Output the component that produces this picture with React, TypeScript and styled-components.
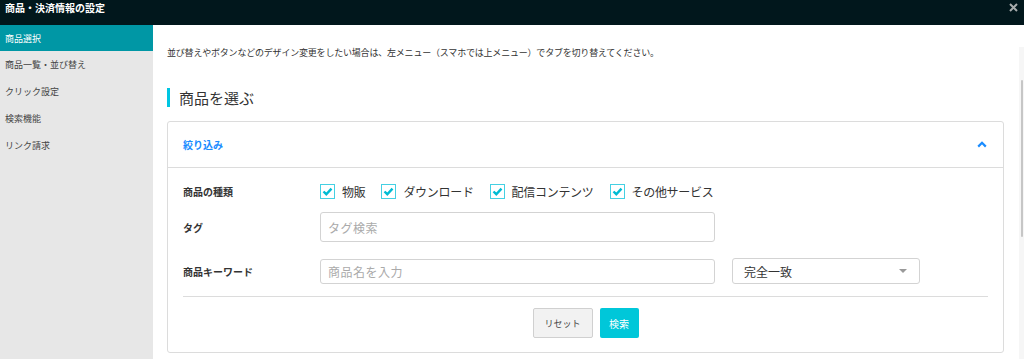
import styled, { createGlobalStyle } from "styled-components";

const GlobalStyle = createGlobalStyle`
  html, body {
    margin: 0;
    padding: 0;
    background: #fff;
  }
  body {
    font-family: "Noto Sans CJK JP", "Noto Sans", sans-serif;
    color: #333;
    overflow: hidden;
  }
  * { box-sizing: border-box; }
`;

const menuItems = ["商品選択", "商品一覧・並び替え", "クリック設定", "検索機能", "リンク請求"];
const kinds = ["物販", "ダウンロード", "配信コンテンツ", "その他サービス"];

const CheckIcon = () => (
  <svg width="11" height="9" viewBox="0 0 11 9">
    <polyline points="1.5,4.5 4.3,7.2 9.5,1.6" fill="none" stroke="#00bcd4" strokeWidth="2.4" />
  </svg>
);

const App = () => {
  return (
    <Page>
      <GlobalStyle />
      <Header>
        <Title>商品・決済情報の設定</Title>
        <svg width="9" height="9" viewBox="0 0 9 9">
          <path d="M1 1 L8 8 M8 1 L1 8" stroke="#a7abac" strokeWidth="2" />
        </svg>
      </Header>

      <Body>
        <Sidebar>
          {menuItems.map((item, i) => (
            <MenuItem key={item} $active={i === 0}>{item}</MenuItem>
          ))}
        </Sidebar>

        <Main>
          <Intro>並び替えやボタンなどのデザイン変更をしたい場合は、左メニュー（スマホでは上メニュー）でタブを切り替えてください。</Intro>
          <Heading>商品を選ぶ</Heading>

          <Card>
            <CardHeader>
              <CardTitle>絞り込み</CardTitle>
              <svg width="10" height="7" viewBox="0 0 10 7">
                <polyline points="1.2,5.6 5,1.8 8.8,5.6" fill="none" stroke="#1a8cff" strokeWidth="2.2" />
              </svg>
            </CardHeader>

            <CardBody>
              <FormRow $height={17}>
                <Label>商品の種類</Label>
                <Checks>
                  {kinds.map(k => (
                    <CheckItem key={k}>
                      <Box><CheckIcon /></Box>
                      {k}
                    </CheckItem>
                  ))}
                </Checks>
              </FormRow>

              <FormRow $height={30} $gap={12}>
                <Label>タグ</Label>
                <Input $height={30} placeholder="タグ検索" />
              </FormRow>

              <FormRow $height={26} $gap={16}>
                <Label>商品キーワード</Label>
                <Fields>
                  <Input $height={25} placeholder="商品名を入力" />
                  <Select>
                    完全一致
                    <Caret />
                  </Select>
                </Fields>
              </FormRow>

              <Divider />

              <Buttons>
                <ResetButton>リセット</ResetButton>
                <SearchButton>検索</SearchButton>
              </Buttons>
            </CardBody>
          </Card>
        </Main>

        <Track>
          <Thumb />
        </Track>
      </Body>
    </Page>
  );
};

const Page = styled.div`
  width: 1024px;
  height: 359px;
  display: flex;
  flex-direction: column;
  overflow: hidden;
`;

const Header = styled.div`
  height: 25px;
  flex-shrink: 0;
  background: #01171c;
  display: flex;
  justify-content: space-between;
  align-items: flex-start;
  padding: 1px 6px 0 5px;

  svg {
    margin-top: 2px;
  }
`;

const Title = styled.div`
  font-size: 10px;
  font-weight: 700;
  line-height: 14px;
  color: #fff;
`;

const Body = styled.div`
  flex: 1;
  display: flex;
  min-height: 0;
`;

const Sidebar = styled.div`
  width: 153px;
  flex-shrink: 0;
  background: #e7e7e7;
  display: flex;
  flex-direction: column;
`;

const MenuItem = styled.div<{ $active?: boolean }>`
  height: ${p => (p.$active ? "26px" : "27px")};
  display: flex;
  align-items: center;
  padding: 0 5px;
  font-size: 9px;
  color: ${p => (p.$active ? "#fff" : "#444")};
  background: ${p => (p.$active ? "#0097a5" : "transparent")};
`;

const Main = styled.div`
  flex: 1;
  padding: 21px 15px 0 14px;
  background: #fff;
`;

const Intro = styled.p`
  margin: 0;
  font-size: 9px;
  line-height: 13px;
  letter-spacing: -0.2px;
  color: #333;
  white-space: nowrap;
`;

const Heading = styled.h2`
  margin: 29px 0 0;
  height: 19px;
  border-left: 3px solid #00c6e2;
  padding-left: 9px;
  font-size: 15px;
  font-weight: 400;
  line-height: 19px;
  color: #333;
`;

const Card = styled.div`
  margin-top: 14px;
  border: 1px solid #dcdcdc;
  border-radius: 3px;
  background: #fff;
`;

const CardHeader = styled.div`
  height: 46px;
  border-bottom: 1px solid #dcdcdc;
  display: flex;
  align-items: center;
  justify-content: space-between;
  padding: 0 16px 0 15px;
`;

const CardTitle = styled.span`
  font-size: 10px;
  font-weight: 700;
  color: #1a8cff;
`;

const CardBody = styled.div`
  padding: 15px 15px 14px;
`;

const FormRow = styled.div<{ $height: number; $gap?: number }>`
  display: grid;
  grid-template-columns: 137px 1fr;
  align-items: center;
  height: ${p => p.$height}px;
  margin-top: ${p => p.$gap ?? 0}px;
`;

const Label = styled.div`
  font-size: 10px;
  font-weight: 700;
  color: #333;
`;

const Checks = styled.div`
  display: flex;
  align-items: center;
  gap: 16px;
`;

const CheckItem = styled.label`
  display: flex;
  align-items: center;
  gap: 7px;
  font-size: 12px;
  letter-spacing: -0.3px;
  color: #333;
  white-space: nowrap;
`;

const Box = styled.span`
  width: 15px;
  height: 15px;
  border: 1px solid #45d0e3;
  display: flex;
  align-items: center;
  justify-content: center;
  background: #fff;
`;

const Fields = styled.div`
  display: flex;
  align-items: center;
  gap: 17px;
`;

const Input = styled.input<{ $height: number }>`
  width: 395px;
  height: ${p => p.$height}px;
  border: 1px solid #d3d3d3;
  border-radius: 3px;
  padding: 0 7px;
  font-family: "Noto Sans CJK JP", sans-serif;
  font-size: 12px;
  letter-spacing: 0.5px;
  outline: none;
  &::placeholder {
    color: #aaa;
  }
`;

const Select = styled.div`
  width: 188px;
  height: 26px;
  border: 1px solid #d3d3d3;
  border-radius: 3px;
  display: flex;
  align-items: center;
  justify-content: space-between;
  padding: 0 12px 0 11px;
  font-size: 12px;
  color: #333;
`;

const Caret = styled.span`
  width: 0;
  height: 0;
  border-left: 4px solid transparent;
  border-right: 4px solid transparent;
  border-top: 4px solid #999;
`;

const Divider = styled.hr`
  margin: 12px 0 0;
  border: 0;
  border-top: 1px solid #dcdcdc;
`;

const Buttons = styled.div`
  margin-top: 11px;
  display: flex;
  justify-content: center;
  gap: 7px;
`;

const ResetButton = styled.button`
  width: 60px;
  height: 30px;
  border: 1px solid #d0d0d0;
  border-radius: 2px;
  background: #f2f2f2;
  font-family: "Noto Sans CJK JP", sans-serif;
  font-size: 9px;
  color: #444;
  padding: 0;
`;

const SearchButton = styled.button`
  width: 39px;
  height: 30px;
  border: 0;
  border-radius: 2px;
  background: #00c7d9;
  font-family: "Noto Sans CJK JP", sans-serif;
  font-size: 10px;
  color: #fff;
  padding: 0;
`;

const Track = styled.div`
  width: 5px;
  flex-shrink: 0;
  margin-top: 22px;
  background: #f6f6f6;
  padding-top: 33px;
`;

const Thumb = styled.div`
  width: 2px;
  height: 157px;
  margin-left: 2px;
  background: #c6c6c6;
  border-radius: 1px;
`;

export default App;
